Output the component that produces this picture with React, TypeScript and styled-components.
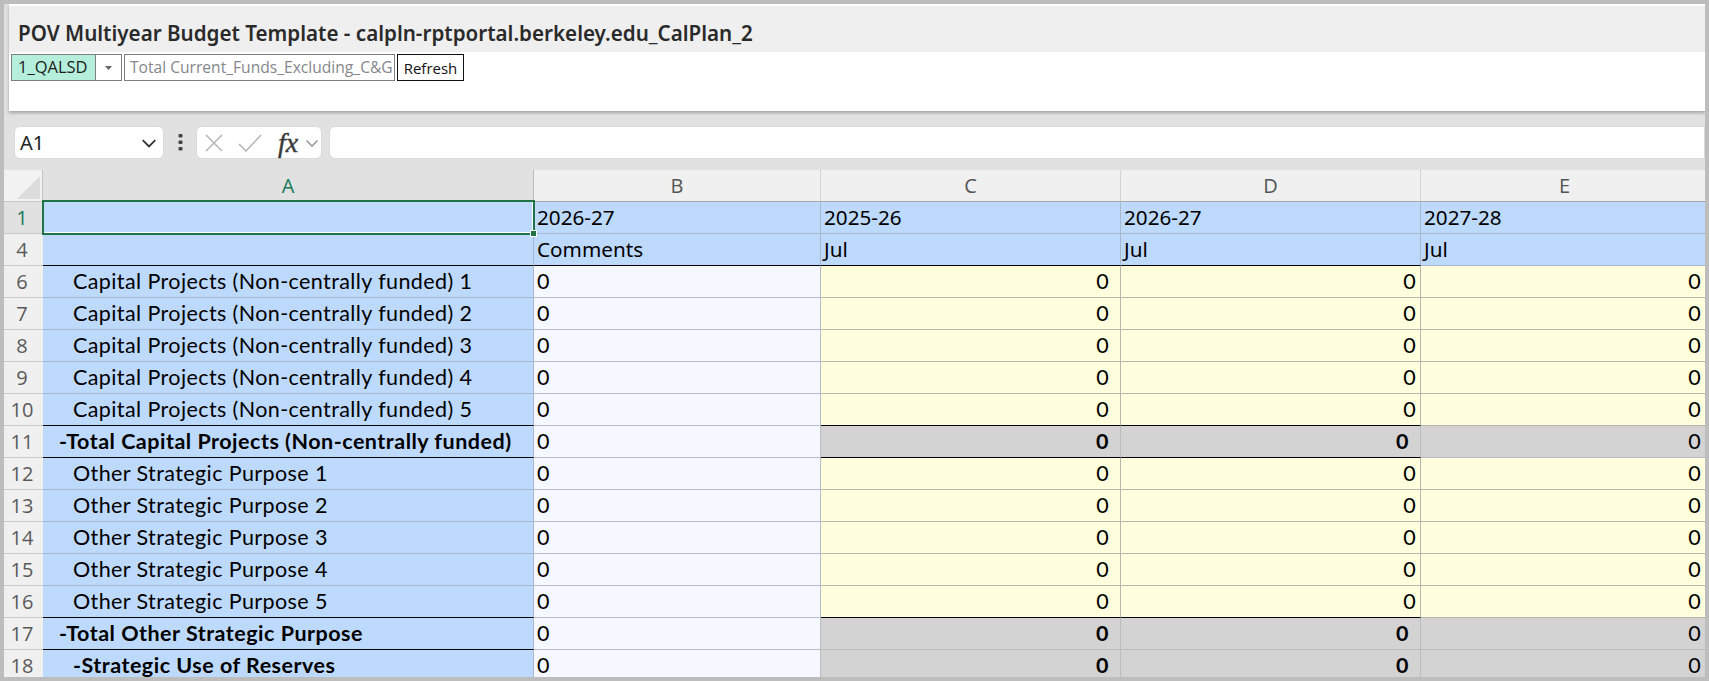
import React from 'react'
import styled, { createGlobalStyle } from 'styled-components'

const GlobalStyle = createGlobalStyle`
  html, body {
    margin: 0;
    padding: 0;
    overflow: hidden;
  }
  * {
    box-sizing: border-box;
  }
`

const COLUMNS = '39px 491px 287px 300px 300px 288px'

const Frame = styled.div`
  width: 1709px;
  height: 681px;
  border: 4px solid #bdbdbd;
  background: #e1e1e1;
  overflow: hidden;
  display: flex;
  flex-direction: column;
`

const Panel = styled.div`
  flex: none;
  height: 107px;
  margin-left: 5px;
  padding-top: 2px;
  background: #fff;
  box-shadow: 0 2px 3px rgba(0, 0, 0, 0.28);
`

const TitleBar = styled.div`
  height: 46px;
  background: #efefef;
  padding: 12px 0 0 9px;
  font-family: 'Noto Sans', sans-serif;
  font-size: 20.6px;
  font-weight: 600;
  line-height: 30px;
  color: #2a2a2a;
`

const Controls = styled.div`
  display: flex;
  height: 27px;
  margin: 2px 0 0 2px;
  font-family: 'Open Sans', sans-serif;
  font-size: 15.6px;
`

const Combo = styled.div`
  display: flex;
  width: 111px;
  border: 1px solid #7f7f7f;
  color: #1c1c1c;
`

const ComboValue = styled.div`
  width: 84px;
  background: #b5efdb;
  border-right: 1px solid #7f7f7f;
  padding-left: 6px;
  font-size: 16.5px;
  line-height: 24px;
  white-space: nowrap;
  overflow: hidden;
`

const ComboArrow = styled.div`
  flex: 1;
  display: flex;
  align-items: center;
  justify-content: center;
`

const TextField = styled.div`
  width: 271px;
  margin-left: 2px;
  border: 1px solid #7f7f7f;
  padding-left: 5px;
  color: #85878b;
  line-height: 24px;
  white-space: nowrap;
  overflow: hidden;
`

const RefreshButton = styled.div`
  width: 67px;
  margin-left: 2px;
  border: 1px solid #111;
  text-align: center;
  font-size: 15px;
  line-height: 27px;
  color: #111;
`

const FormulaBar = styled.div`
  flex: none;
  display: flex;
  align-items: center;
  height: 33px;
  margin: 15px 0 0 10px;
`

const RoundBox = styled.div`
  background: #fff;
  border-radius: 6px;
  border: 1px solid #dadada;
  height: 33px;
  display: flex;
  align-items: center;
`

const NameBox = styled(RoundBox)`
  width: 150px;
  padding: 0 6px 0 5px;
  justify-content: space-between;
  font-family: 'Noto Sans', sans-serif;
  font-size: 20px;
  color: #222;
`

const Kebab = styled.div`
  width: 32px;
  display: flex;
  justify-content: center;
`

const FxBox = styled(RoundBox)`
  width: 126px;
  padding-left: 8px;
`

const FxLabel = styled.span`
  font-family: 'Liberation Serif', serif;
  font-style: italic;
  font-size: 28px;
  line-height: 30px;
  -webkit-text-stroke: 0.4px #3a3a3a;
  color: #3a3a3a;
  margin: 0 7px 0 16px;
`

const FormulaInput = styled(RoundBox)`
  flex: 1;
  margin-left: 7px;
  border-radius: 6px 0 0 6px;
`

const Sheet = styled.div`
  flex: none;
  position: relative;
  margin-top: 11px;
`

const HeaderRow = styled.div`
  display: grid;
  grid-template-columns: ${COLUMNS};
  height: 32px;
`

const Corner = styled.div`
  background: #f2f2f2;
  border-right: 1px solid #c4c4c4;
  border-bottom: 1px solid #c4c4c4;
  padding: 0 2px 2px 0;
  display: flex;
  align-items: flex-end;
  justify-content: flex-end;
`

const ColumnHead = styled.div<{ $active?: boolean }>`
  background: ${p => (p.$active ? '#e1e1e1' : '#f0f0f0')};
  color: ${p => (p.$active ? '#17795a' : '#555')};
  border-right: 1px solid ${p => (p.$active ? '#bdbdbd' : '#d2d2d2')};
  border-bottom: 1px solid #a3a3a3;
  font-family: 'Open Sans', sans-serif;
  font-size: 20px;
  text-align: center;
  line-height: 31px;
`

const Row = styled.div`
  display: grid;
  grid-template-columns: ${COLUMNS};
  height: 32px;
`

const RowHead = styled.div<{ $active?: boolean }>`
  background: ${p => (p.$active ? '#e1e1e1' : '#f0f0f0')};
  color: ${p => (p.$active ? '#17795a' : '#5a5a5a')};
  border-bottom: 1px solid #c8c8c8;
  font-family: 'Open Sans', sans-serif;
  font-size: 20px;
  text-align: center;
  line-height: 31px;
  padding-right: 3px;
`

type Tone = 'blue' | 'paper' | 'yellow' | 'grey'

const toneColors: Record<Tone, string> = {
  blue: '#bdd9fc',
  paper: '#f6f8ff',
  yellow: '#ffffdd',
  grey: '#d3d3d3',
}

const toneLines: Record<Tone, string> = {
  blue: '#a8b8cf',
  paper: '#b9bcc4',
  yellow: '#b7b7b0',
  grey: '#bcbcbc',
}

const Cell = styled.div<{ $tone: Tone; $heavy?: boolean; $bold?: boolean; $right?: boolean; $indent?: number; $pad?: number; $label?: boolean }>`
  background: ${p => toneColors[p.$tone]};
  border-right: 1px solid ${p => toneLines[p.$tone]};
  border-bottom: 1px solid ${p => (p.$heavy ? '#000' : toneLines[p.$tone])};
  font-family: ${p => (p.$label ? "'Noto Sans', sans-serif" : "'Lato', sans-serif")};
  font-size: ${p => (p.$label ? '20.7px' : '21.5px')};
  letter-spacing: ${p => (p.$label ? 0 : p.$bold ? '0.5px' : '0.4px')};
  font-weight: ${p => (p.$bold ? 700 : 400)};
  line-height: 31px;
  color: #000;
  white-space: nowrap;
  overflow: hidden;
  text-align: ${p => (p.$right ? 'right' : 'left')};
  padding-left: ${p => (p.$indent ?? 3)}px;
  padding-right: ${p => (p.$pad ?? 4)}px;
`

const Selection = styled.div`
  position: absolute;
  left: 38px;
  top: 30px;
  width: 493px;
  height: 35px;
  border: 2px solid #1f7346;
  box-shadow: inset -1px -1px 0 #fff;
`

const Handle = styled.div`
  position: absolute;
  right: -4px;
  bottom: -4px;
  width: 7px;
  height: 7px;
  background: #1f7346;
  border: 1px solid #fff;
`

const Chevron = ({ color, size = 14 }: { color: string; size?: number }) => (
  <svg width={size} height={size} viewBox="0 0 14 14" fill="none" stroke={color} strokeWidth="1.6">
    <path d="M1.5 4.5 7 10l5.5-5.5" />
  </svg>
)

type RowData = {
  n: number
  label: string
  kind: 'item' | 'total' | 'sub'
  heavy?: boolean
}

const capital = [1, 2, 3, 4, 5].map((i, k): RowData => ({
  n: 6 + k,
  label: `Capital Projects (Non-centrally funded) ${i}`,
  kind: 'item',
  heavy: i === 5,
}))

const other = [1, 2, 3, 4, 5].map((i, k): RowData => ({
  n: 12 + k,
  label: `Other Strategic Purpose ${i}`,
  kind: 'item',
  heavy: i === 5,
}))

const rows: RowData[] = [
  ...capital,
  { n: 11, label: '-Total Capital Projects (Non-centrally funded)', kind: 'total', heavy: true },
  ...other,
  { n: 17, label: '-Total Other Strategic Purpose', kind: 'total' },
  { n: 18, label: '-Strategic Use of Reserves', kind: 'sub' },
]

const App = () => {
  return (
    <Frame>
      <GlobalStyle />
      <Panel>
        <TitleBar>POV Multiyear Budget Template - calpln-rptportal.berkeley.edu_CalPlan_2</TitleBar>
        <Controls>
          <Combo>
            <ComboValue>1_QALSD</ComboValue>
            <ComboArrow>
              <svg width="7" height="4" viewBox="0 0 7 4">
                <path d="M0 0h7L3.5 4z" fill="#666" />
              </svg>
            </ComboArrow>
          </Combo>
          <TextField>Total Current_Funds_Excluding_C&amp;G</TextField>
          <RefreshButton>Refresh</RefreshButton>
        </Controls>
      </Panel>
      <FormulaBar>
        <NameBox>
          <span>A1</span>
          <Chevron color="#333" size={16} />
        </NameBox>
        <Kebab>
          <svg width="5" height="17" viewBox="0 0 5 17" fill="#444">
            <rect x="0.5" y="0" width="4" height="3.5" rx="1" />
            <rect x="0.5" y="6.5" width="4" height="3.5" rx="1" />
            <rect x="0.5" y="13" width="4" height="3.5" rx="1" />
          </svg>
        </Kebab>
        <FxBox>
          <svg width="18" height="18" viewBox="0 0 18 18" fill="none" stroke="#b5b5b5" strokeWidth="1.5">
            <path d="M1 1l16 16M17 1 1 17" />
          </svg>
          <svg width="24" height="18" viewBox="0 0 24 18" fill="none" stroke="#b5b5b5" strokeWidth="1.5" style={{ marginLeft: 15 }}>
            <path d="M1 10l7 7L23 1" />
          </svg>
          <FxLabel>fx</FxLabel>
          <Chevron color="#9b9b9b" size={14} />
        </FxBox>
        <FormulaInput />
      </FormulaBar>
      <Sheet>
        <HeaderRow>
          <Corner>
            <svg width="23" height="23" viewBox="0 0 23 23">
              <path d="M23 0v23H0z" fill="#dcdcdc" />
            </svg>
          </Corner>
          <ColumnHead $active>A</ColumnHead>
          <ColumnHead>B</ColumnHead>
          <ColumnHead>C</ColumnHead>
          <ColumnHead>D</ColumnHead>
          <ColumnHead>E</ColumnHead>
        </HeaderRow>
        <Row>
          <RowHead $active>1</RowHead>
          <Cell $tone="blue" />
          <Cell $tone="blue" $label>2026-27</Cell>
          <Cell $tone="blue" $label>2025-26</Cell>
          <Cell $tone="blue" $label>2026-27</Cell>
          <Cell $tone="blue" $label>2027-28</Cell>
        </Row>
        <Row>
          <RowHead>4</RowHead>
          <Cell $tone="blue" $heavy />
          <Cell $tone="blue" $label $heavy>Comments</Cell>
          <Cell $tone="blue" $label $heavy>Jul</Cell>
          <Cell $tone="blue" $label $heavy>Jul</Cell>
          <Cell $tone="blue" $label>Jul</Cell>
        </Row>
        {rows.map(r => {
          const item = r.kind === 'item'
          const bold = !item
          const tone: Tone = item ? 'yellow' : 'grey'
          return (
            <Row key={r.n}>
              <RowHead>{r.n}</RowHead>
              <Cell $tone="blue" $bold={bold} $heavy={r.heavy || r.n === 17} $indent={r.kind === 'total' ? 16 : 30}>
                {r.label}
              </Cell>
              <Cell $tone="paper">0</Cell>
              <Cell $tone={tone} $right $bold={bold} $heavy={r.heavy} $pad={11}>0</Cell>
              <Cell $tone={tone} $right $bold={bold} $heavy={r.heavy} $pad={bold ? 11 : 4}>0</Cell>
              <Cell $tone={tone} $right $pad={7}>0</Cell>
            </Row>
          )
        })}
        <Selection>
          <Handle />
        </Selection>
      </Sheet>
    </Frame>
  )
}

export default App
